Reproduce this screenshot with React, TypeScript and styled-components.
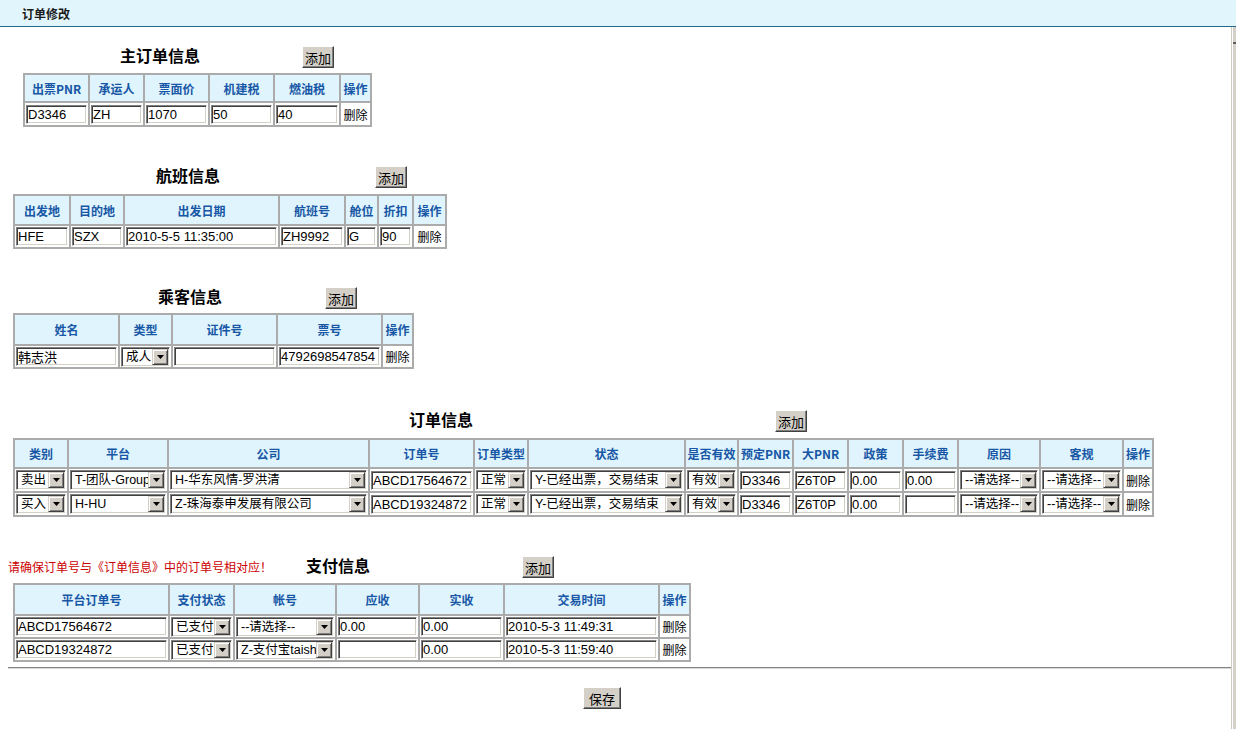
import React from 'react';
import styled, { createGlobalStyle } from 'styled-components';

const GlobalStyle = createGlobalStyle`
  html, body { margin: 0; padding: 0; background: #fff; }
  body {
    font-family: "Noto Sans CJK SC", "Liberation Sans", sans-serif;
    font-size: 12px;
    color: #000;
  }
  * { box-sizing: border-box; }
`;

const Page = styled.div`
  width: 1236px;
  min-height: 729px;
  display: flex;
  flex-direction: column;
  overflow: hidden;
`;

const TitleBar = styled.div`
  height: 27px;
  flex: none;
  background: #e1f5fd;
  border-bottom: 1px solid #236a89;
  padding-left: 22px;
  display: flex;
  align-items: center;
  font-weight: 700;
  font-size: 12px;
  color: #1a1a1a;
`;

const Body = styled.div`
  display: flex;
  flex: 1;
`;

const Content = styled.div`
  flex: 1;
  padding-top: 19px;
  display: flex;
  flex-direction: column;
  align-items: flex-start;
`;

const RightEdge = styled.div`
  width: 5px;
  flex: none;
  position: relative;
  border-left: 1px solid #cfcbc3;
  background: linear-gradient(to right, #fff 0 1px, #d4d0c8 1px);
  &::after {
    content: '';
    position: absolute;
    left: 1px;
    right: 0;
    top: 15px;
    height: 2px;
    background: #5f5f5f;
  }
`;

const Section = styled.section<{ $mt: number }>`
  margin-top: ${(p) => p.$mt}px;
  display: flex;
  flex-direction: column;
  align-items: flex-start;
`;

const Heading = styled.div`
  display: flex;
  align-items: flex-start;
  height: 22px;
`;

const TitleCell = styled.h2<{ $left: number; $w: number }>`
  margin: 0 0 0 ${(p) => p.$left}px;
  width: ${(p) => p.$w}px;
  flex: none;
  font-size: 16px;
  font-weight: 700;
  line-height: 18px;
  color: #000;
  white-space: nowrap;
`;

const Note = styled.div<{ $left: number; $w: number }>`
  margin-left: ${(p) => p.$left}px;
  width: ${(p) => p.$w}px;
  flex: none;
  color: #cc0000;
  font-size: 12px;
  line-height: 22px;
  white-space: nowrap;
`;

const Btn = styled.button<{ $w?: number; $h?: number }>`
  width: ${(p) => p.$w ?? 32}px;
  height: ${(p) => p.$h ?? 22}px;
  flex: none;
  margin: 0;
  padding: 0;
  background: #d4d0c8;
  border: 1px solid;
  border-color: #fff #404040 #404040 #fff;
  box-shadow: inset -1px -1px #808080;
  font-family: "Noto Sans CJK SC", sans-serif;
  font-size: 13px;
  line-height: 1;
  color: #000;
`;

const Grid = styled.table<{ $left: number; $gap: number; $head: number; $row: number; $w: number }>`
  margin: ${(p) => p.$gap}px 0 0 ${(p) => p.$left}px;
  width: ${(p) => p.$w}px;
  border-collapse: separate;
  border-spacing: 0;
  table-layout: fixed;
  border: 1px solid #ababab;

  th, td {
    border: 1px solid #ababab;
    padding: 0 1px;
    vertical-align: middle;
  }
  th {
    height: ${(p) => p.$head}px;
    background: #dff4fd;
    color: #1757a5;
    font-weight: 700;
    font-size: 12px;
    text-align: center;
    white-space: nowrap;
    overflow: hidden;
  }
  td {
    height: ${(p) => p.$row}px;
  }
`;

const Col = styled.col<{ $w: number }>`
  width: ${(p) => p.$w}px;
`;

const Field = styled.input`
  display: block;
  width: 100%;
  height: 19px;
  margin: 0;
  padding: 0 1px;
  border: 1px solid;
  border-color: #808080 #fff #fff #808080;
  box-shadow: inset 1px 1px #404040, inset -1px -1px #d4d0c8;
  font-family: "Liberation Sans", "Noto Sans CJK SC", sans-serif;
  font-size: 13px;
  color: #000;
  background: #fff;
  outline: none;
`;

const Select = styled.div`
  display: flex;
  align-items: stretch;
  width: 100%;
  height: 20px;
  padding: 1px 1px 1px 2px;
  border: 1px solid;
  border-color: #808080 #fff #fff #808080;
  box-shadow: inset 1px 1px #404040, inset -1px -1px #d4d0c8;
  background: #fff;
`;

const SelectText = styled.span`
  flex: 1;
  min-width: 0;
  overflow: hidden;
  white-space: nowrap;
  font-family: "Liberation Sans", "Noto Sans CJK SC", sans-serif;
  font-size: 12.5px;
  line-height: 16px;
  padding: 0 2px 0 2px;
`;

const SelectArrow = styled.span`
  width: 16px;
  flex: none;
  display: flex;
  align-items: center;
  justify-content: center;
  background: #d4d0c8;
  border: 1px solid;
  border-color: #d4d0c8 #404040 #404040 #d4d0c8;
  box-shadow: inset 1px 1px #fff, inset -1px -1px #808080;
`;

const DelText = styled.span`
  display: block;
  text-align: center;
  font-size: 12px;
  color: #000;
  white-space: nowrap;
`;

const Divider = styled.div`
  align-self: stretch;
  margin: 5px 0 0 8px;
  border-top: 1px solid #858585;
  border-bottom: 1px solid #d8d8d8;
`;

const SaveRow = styled.div`
  margin: 18px 0 0 583px;
`;

type Cell = { t: 'i'; v: string } | { t: 's'; v: string } | { t: 'd' };
const I = (v: string): Cell => ({ t: 'i', v });
const S = (v: string): Cell => ({ t: 's', v });
const D: Cell = { t: 'd' };

type ColDef = [string, number];

const Arrow = () => (
  <svg width="7" height="4" viewBox="0 0 7 4">
    <path d="M0 0h7L3.5 4z" fill="#000" />
  </svg>
);

const CellView: React.FC<{ c: Cell }> = ({ c }) => {
  if (c.t === 'i') return <Field defaultValue={c.v} />;
  if (c.t === 's')
    return (
      <Select>
        <SelectText>{c.v}</SelectText>
        <SelectArrow>
          <Arrow />
        </SelectArrow>
      </Select>
    );
  return <DelText>删除</DelText>;
};

const DataTable: React.FC<{
  cols: ColDef[];
  rows: Cell[][];
  left: number;
  gap: number;
  head: number;
  row: number;
}> = ({ cols, rows, left, gap, head, row }) => {
  const w = cols.reduce((s, c) => s + c[1], 0);
  return (
    <Grid $left={left} $gap={gap} $head={head} $row={row} $w={w}>
      <colgroup>
        {cols.map(([l, cw]) => (
          <Col key={l} $w={cw} />
        ))}
      </colgroup>
      <thead>
        <tr>
          {cols.map(([l]) => (
            <th key={l}>{l}</th>
          ))}
        </tr>
      </thead>
      <tbody>
        {rows.map((r, ri) => (
          <tr key={ri}>
            {r.map((c, ci) => (
              <td key={ci}>
                <CellView c={c} />
              </td>
            ))}
          </tr>
        ))}
      </tbody>
    </Grid>
  );
};

const mainCols: ColDef[] = [
  ['出票PNR', 65],
  ['承运人', 55],
  ['票面价', 65],
  ['机建税', 65],
  ['燃油税', 66],
  ['操作', 31],
];
const mainRows: Cell[][] = [[I('D3346'), I('ZH'), I('1070'), I('50'), I('40'), D]];

const flightCols: ColDef[] = [
  ['出发地', 56],
  ['目的地', 54],
  ['出发日期', 155],
  ['航班号', 66],
  ['舱位', 33],
  ['折扣', 35],
  ['操作', 33],
];
const flightRows: Cell[][] = [
  [I('HFE'), I('SZX'), I('2010-5-5 11:35:00'), I('ZH9992'), I('G'), I('90'), D],
];

const paxCols: ColDef[] = [
  ['姓名', 105],
  ['类型', 53],
  ['证件号', 105],
  ['票号', 105],
  ['操作', 31],
];
const paxRows: Cell[][] = [[I('韩志洪'), S('成人'), I(''), I('4792698547854'), D]];

const orderCols: ColDef[] = [
  ['类别', 54],
  ['平台', 100],
  ['公司', 201],
  ['订单号', 105],
  ['订单类型', 54],
  ['状态', 157],
  ['是否有效', 53],
  ['预定PNR', 55],
  ['大PNR', 55],
  ['政策', 55],
  ['手续费', 55],
  ['原因', 82],
  ['客规', 83],
  ['操作', 30],
];
const orderRows: Cell[][] = [
  [
    S('卖出'),
    S('T-团队-Group'),
    S('H-华东风情-罗洪清'),
    I('ABCD17564672'),
    S('正常'),
    S('Y-已经出票，交易结束'),
    S('有效'),
    I('D3346'),
    I('Z6T0P'),
    I('0.00'),
    I('0.00'),
    S('--请选择--'),
    S('--请选择--'),
    D,
  ],
  [
    S('买入'),
    S('H-HU'),
    S('Z-珠海泰申发展有限公司'),
    I('ABCD19324872'),
    S('正常'),
    S('Y-已经出票，交易结束'),
    S('有效'),
    I('D3346'),
    I('Z6T0P'),
    I('0.00'),
    I(''),
    S('--请选择--'),
    S('--请选择--'),
    D,
  ],
];

const payCols: ColDef[] = [
  ['平台订单号', 155],
  ['支付状态', 65],
  ['帐号', 102],
  ['应收', 83],
  ['实收', 85],
  ['交易时间', 155],
  ['操作', 31],
];
const payRows: Cell[][] = [
  [I('ABCD17564672'), S('已支付'), S('--请选择--'), I('0.00'), I('0.00'), I('2010-5-3 11:49:31'), D],
  [I('ABCD19324872'), S('已支付'), S('Z-支付宝taishan'), I(''), I('0.00'), I('2010-5-3 11:59:40'), D],
];

export default function App() {
  return (
    <Page>
      <GlobalStyle />
      <TitleBar>订单修改</TitleBar>
      <Body>
        <Content>
          <Section $mt={0}>
            <Heading>
              <TitleCell $left={120} $w={182}>主订单信息</TitleCell>
              <Btn>添加</Btn>
            </Heading>
            <DataTable cols={mainCols} rows={mainRows} left={23} gap={5} head={28} row={24} />
          </Section>

          <Section $mt={39}>
            <Heading>
              <TitleCell $left={156} $w={219}>航班信息</TitleCell>
              <Btn>添加</Btn>
            </Heading>
            <DataTable cols={flightCols} rows={flightRows} left={13} gap={6} head={30} row={23} />
          </Section>

          <Section $mt={38}>
            <Heading>
              <TitleCell $left={158} $w={167}>乘客信息</TitleCell>
              <Btn>添加</Btn>
            </Heading>
            <DataTable cols={paxCols} rows={paxRows} left={13} gap={4} head={31} row={23} />
          </Section>

          <Section $mt={41}>
            <Heading>
              <TitleCell $left={409} $w={366}>订单信息</TitleCell>
              <Btn>添加</Btn>
            </Heading>
            <DataTable cols={orderCols} rows={orderRows} left={13} gap={6} head={29} row={24} />
          </Section>

          <Section $mt={39}>
            <Heading>
              <Note $left={8} $w={298}>请确保订单号与《订单信息》中的订单号相对应！</Note>
              <TitleCell $left={0} $w={216}>支付信息</TitleCell>
              <Btn>添加</Btn>
            </Heading>
            <DataTable cols={payCols} rows={payRows} left={13} gap={5} head={31} row={23} />
          </Section>

          <Divider />
          <SaveRow>
            <Btn $w={38} $h={22}>保存</Btn>
          </SaveRow>
        </Content>
        <RightEdge />
      </Body>
    </Page>
  );
}
